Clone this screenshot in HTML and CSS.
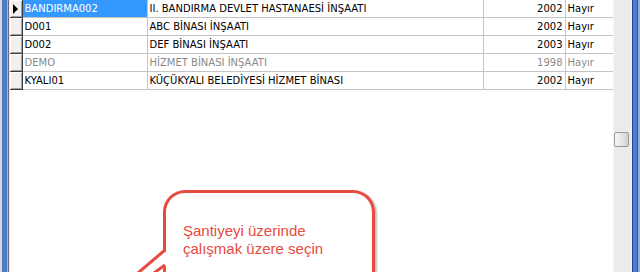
FILE: index.html
```html
<!DOCTYPE html>
<html lang="tr">
<head>
    <meta charset="UTF-8">
    <title>Şantiye Seçimi</title>
    <link rel="stylesheet" href="styles.css">
</head>
<body>
    <div class="window">
        <div class="frame-left"></div>

        <div class="grid-area">
            <table class="grid">
                <colgroup>
                    <col class="c-ind">
                    <col class="c-code">
                    <col class="c-name">
                    <col class="c-year">
                    <col class="c-flag">
                </colgroup>
                <tbody>
                    <tr>
                        <td class="ind"><span class="arrow"></span></td>
                        <td class="selected">BANDIRMA002</td>
                        <td>II. BANDIRMA DEVLET HASTANAESİ İNŞAATI</td>
                        <td class="num">2002</td>
                        <td>Hayır</td>
                    </tr>
                    <tr>
                        <td class="ind"></td>
                        <td>D001</td>
                        <td>ABC BİNASI İNŞAATI</td>
                        <td class="num">2002</td>
                        <td>Hayır</td>
                    </tr>
                    <tr>
                        <td class="ind"></td>
                        <td>D002</td>
                        <td>DEF BİNASI İNŞAATI</td>
                        <td class="num">2003</td>
                        <td>Hayır</td>
                    </tr>
                    <tr class="inactive">
                        <td class="ind"></td>
                        <td>DEMO</td>
                        <td>HİZMET BİNASI İNŞAATI</td>
                        <td class="num">1998</td>
                        <td>Hayır</td>
                    </tr>
                    <tr>
                        <td class="ind"></td>
                        <td>KYALI01</td>
                        <td>KÜÇÜKYALI BELEDİYESİ HİZMET BİNASI</td>
                        <td class="num">2002</td>
                        <td>Hayır</td>
                    </tr>
                </tbody>
            </table>
        </div>

        <div class="scrollbar">
            <div class="thumb"></div>
        </div>

        <div class="frame-right"></div>
    </div>

    <!-- hint balloon over the grid -->
    <div class="callout">
        <p>Şantiyeyi üzerinde<br>çalışmak üzere seçin</p>
    </div>
    <svg class="callout-tail" width="40" height="32" viewBox="0 0 40 32">
        <polygon points="37,10 7,34 24,34 37,25" fill="#fff"/>
        <polyline points="35,10 8,33" fill="none" stroke="#e84a40" stroke-width="3"/>
        <polyline points="35,25 24,33" fill="none" stroke="#e84a40" stroke-width="3"/>
    </svg>
</body>
</html>
```

FILE: styles.css
```css
body {
    margin: 0;
    width: 640px;
    height: 272px;
    overflow: hidden;
    position: relative;
    background: #fff;
    font-family: "DejaVu Sans", sans-serif;
    font-size: 10px;
}

.window {
    display: flex;
    height: 272px;
}

.frame-left {
    width: 10px;
    background: linear-gradient(to right,
        #d6d6d6 0, #d6d6d6 2px,
        #4b7ac6 2px, #4b7ac6 7px,
        #b4b4b4 7px, #b4b4b4 8px,
        #6e6e6e 8px, #6e6e6e 9px,
        #e6e6e6 9px, #e6e6e6 10px);
}

.grid-area {
    width: 603px;
    background: #fff;
}

.grid {
    border-collapse: collapse;
    table-layout: fixed;
    width: 603px;
}

.c-ind { width: 12px; }
.c-code { width: 125px; }
.c-name { width: 336px; }
.c-year { width: 82px; }
.c-flag { width: 48px; }

.grid td {
    height: 17px;
    padding: 0 2px;
    border-right: 1px solid #c4c4c4;
    border-bottom: 1px solid #c4c4c4;
    white-space: nowrap;
    overflow: hidden;
    color: #000;
    line-height: 17px;
}

.grid td.num {
    text-align: right;
}

.grid td.selected {
    background: #3399ff;
    color: #fff;
}

.grid .inactive td {
    color: #8a8a8a;
}

.grid td.ind {
    padding: 0;
    background: #f0f0f0;
    border-right: 1px solid #3c3c3c;
    border-bottom: 1px solid #3c3c3c;
    box-shadow: inset 1px 1px 0 #fff, inset -1px -1px 0 #a0a0a0;
}

.arrow {
    display: block;
    width: 0;
    height: 0;
    margin-left: 3px;
    border-top: 5px solid transparent;
    border-bottom: 5px solid transparent;
    border-left: 5px solid #000;
}

.scrollbar {
    width: 18px;
    background: #ebebeb;
    border-left: 1px solid #f6f6f6;
    box-sizing: border-box;
    padding-top: 132px;
}

.thumb {
    width: 15px;
    height: 15px;
    box-sizing: border-box;
    border: 1px solid #9a9a9a;
    border-radius: 2px;
    background: linear-gradient(to right, #f6f6f6, #e2e2e2 60%, #cfcfcf);
}

.frame-right {
    width: 9px;
    background: linear-gradient(to right,
        #f4f4f4 0, #f4f4f4 1px,
        #23488f 1px, #23488f 2px,
        #4f7fcb 2px, #4f7fcb 6px,
        #2f5aa3 6px, #2f5aa3 7px,
        #8fb0e0 7px, #8fb0e0 9px);
}

.callout {
    position: absolute;
    left: 163px;
    top: 190px;
    width: 212px;
    height: 82px;
    box-sizing: border-box;
    border: 3px solid #e84a40;
    border-bottom: none;
    border-radius: 22px 22px 0 0;
    background: #fff;
    box-shadow: 2px 1px 2px rgba(0, 0, 0, 0.25);
    padding: 29px 0 0 17px;
}

.callout p {
    margin: 0;
    font-family: "Liberation Sans", Arial, sans-serif;
    font-size: 15px;
    line-height: 18px;
    color: #e84a40;
}

.callout-tail {
    position: absolute;
    left: 130px;
    top: 240px;
}
```
